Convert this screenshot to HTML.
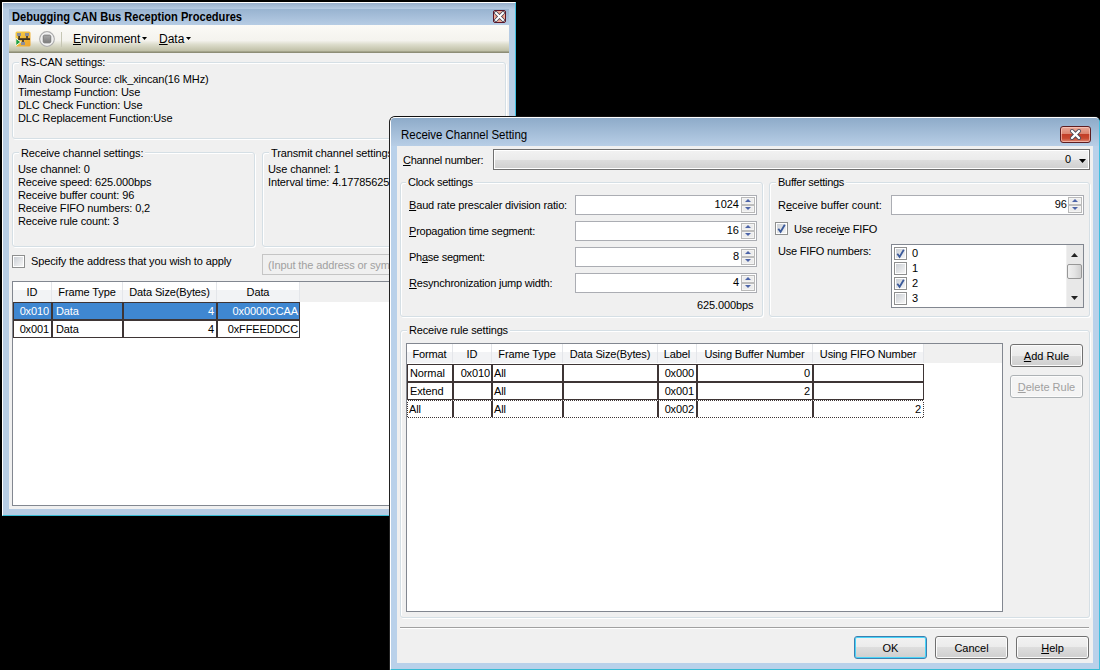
<!DOCTYPE html>
<html><head><meta charset="utf-8">
<style>
*{margin:0;padding:0;box-sizing:border-box}
html,body{width:1100px;height:670px;overflow:hidden;background:#000}
body{position:relative;font-family:"Liberation Sans",sans-serif;font-size:11px;color:#000;letter-spacing:-0.12px}
.a{position:absolute}
.t{position:absolute;white-space:nowrap;line-height:13px}
u{text-decoration:underline;text-decoration-thickness:1px;text-underline-offset:1px}
.grp{position:absolute;border:1px solid #d5dfe5;border-radius:3px;box-shadow:inset 1px 1px 0 #fff,1px 1px 0 #fff}
.glab{position:absolute;background:#f0f0f0;padding:0 2px 0 2px;white-space:nowrap;line-height:13px}
.inp{position:absolute;background:#fff;border:1px solid #abadb3;border-top-color:#abadb3}
.spin{position:absolute;width:15px;}
.cb{position:absolute;width:13px;height:13px;border:1px solid #8e8f8f;background:#fff}
.cb i{position:absolute;left:1px;top:1px;width:9px;height:9px;background:linear-gradient(135deg,#cbcfd5,#f6f6f6)}
.btn{position:absolute;border:1px solid #707070;border-radius:3px;background:linear-gradient(#f2f2f2 0,#ebebeb 50%,#dddddd 50%,#cfcfcf 100%);box-shadow:inset 0 0 0 1px #fcfcfc;text-align:center;line-height:22px;white-space:nowrap}
.grid{position:absolute;border-collapse:collapse}
.hdr{position:absolute;background:linear-gradient(#ffffff 0,#ffffff 40%,#f2f3f5 40%,#f2f3f5 100%)}
.hc{position:absolute;top:0;height:100%;border-right:1px solid #e4e6ea;text-align:center;line-height:21px;white-space:nowrap}
.cell{position:absolute;border:1px solid #3e3535;background:#fff;line-height:17px;white-space:nowrap;overflow:hidden}
</style></head><body>

<!-- ============ WINDOW 1 ============ -->
<div class="a" style="left:2px;top:2px;width:514px;height:514px;background:#b6cce4;border-left:1px solid #fff;border-top:1px solid #fff;border-right:1px solid #41bfdf;border-bottom:1px solid #38bcd4"></div>
<div class="a" style="left:3px;top:3px;width:512px;height:6px;background:linear-gradient(#97afcb,#b5cbe3)"></div>
<div class="a" style="left:9px;top:9px;width:500px;height:16px;background:linear-gradient(#98b3d0,#b6cce4)"></div>
<div class="t" style="left:12px;top:11px;font-weight:bold;font-size:12px;letter-spacing:0;transform:scaleX(0.925);transform-origin:0 0">Debugging CAN Bus Reception Procedures</div>
<!-- close small -->
<div class="a" style="left:493px;top:10px;width:13px;height:13px;border:1px solid #5c1325;border-radius:2px;background:radial-gradient(circle,#e05a3a 0,#f1b6a2 70%,#f3c9bb 100%)"></div>
<svg class="a" style="left:493px;top:10px" width="13" height="13" viewBox="0 0 13 13"><path d="M3 3 L10 10 M10 3 L3 10" stroke="#3a3f55" stroke-width="3.4" stroke-linecap="square"/><path d="M3 3 L10 10 M10 3 L3 10" stroke="#fff" stroke-width="2" stroke-linecap="square"/></svg>

<!-- toolbar -->
<div class="a" style="left:9px;top:25px;width:500px;height:28px;background:linear-gradient(#fbfaf6 0,#f4f3ee 55%,#dcdccb 70%,#bfbfa6 93%,#8d8d76 96%,#8d8d76 100%)"></div>
<!-- icon 1 -->
<svg class="a" style="left:15px;top:31px" width="16" height="16" viewBox="0 0 16 16">
<defs><linearGradient id="og" x1="0" y1="0" x2="1" y2="1"><stop offset="0" stop-color="#f5d048"/><stop offset="1" stop-color="#eda22c"/></linearGradient></defs>
<rect x="0.5" y="0.5" width="15" height="15" rx="1.5" fill="url(#og)"/>
<rect x="2" y="2" width="4" height="3" fill="#8c8f9c"/><rect x="10" y="2" width="4" height="3" fill="#8c8f9c"/>
<rect x="3.3" y="5" width="1.6" height="2.5" fill="#3a3020"/><rect x="11.2" y="5" width="1.6" height="2.5" fill="#3a3020"/>
<rect x="3" y="7.2" width="12" height="1.8" fill="#3a3020"/><rect x="7.2" y="9" width="1.6" height="2" fill="#3a3020"/>
<rect x="6" y="11" width="4" height="3" fill="#8c8f9c"/>
<path d="M0.8 7.3 L5.8 11 L0.8 14.8 Z" fill="#20a040" stroke="#fff" stroke-width="0.9"/>
</svg>
<!-- icon 2 stop -->
<svg class="a" style="left:39px;top:31px" width="16" height="16" viewBox="0 0 16 16">
<defs><linearGradient id="sq" x1="0" y1="0" x2="0" y2="1"><stop offset="0" stop-color="#a8a8a8"/><stop offset="1" stop-color="#7c7c7c"/></linearGradient></defs>
<circle cx="8" cy="8" r="7.3" fill="#e6e6e6" stroke="#adadad" stroke-width="1.2"/>
<circle cx="8" cy="8" r="6" fill="none" stroke="#f6f6f6" stroke-width="1"/>
<rect x="4.3" y="4.2" width="7.4" height="7.6" rx="1.2" fill="url(#sq)" stroke="#707070" stroke-width="0.8"/>
</svg>
<div class="a" style="left:61px;top:32px;width:1px;height:15px;background:#c6c6b4"></div>
<div class="t" style="left:73px;top:33px;font-size:12px;letter-spacing:0"><u>E</u>nvironment</div>
<svg class="a" style="left:142px;top:37px" width="5" height="3"><path d="M0 0 H5 L2.5 3 Z" fill="#000"/></svg>
<div class="t" style="left:159px;top:33px;font-size:12px;letter-spacing:0"><u>D</u>ata</div>
<svg class="a" style="left:186px;top:37px" width="5" height="3"><path d="M0 0 H5 L2.5 3 Z" fill="#000"/></svg>

<!-- client -->
<div class="a" style="left:9px;top:53px;width:500px;height:456px;background:#f0f0f0"></div>

<!-- RS-CAN group -->
<div class="grp" style="left:12px;top:62px;width:494px;height:77px"></div>
<div class="glab" style="left:19px;top:56px">RS-CAN settings:</div>
<div class="t" style="left:18px;top:73px">Main Clock Source: clk_xincan(16 MHz)</div>
<div class="t" style="left:18px;top:86px">Timestamp Function: Use</div>
<div class="t" style="left:18px;top:99px">DLC Check Function: Use</div>
<div class="t" style="left:18px;top:112px">DLC Replacement Function:Use</div>

<!-- receive channel group -->
<div class="grp" style="left:12px;top:152px;width:243px;height:95px"></div>
<div class="glab" style="left:19px;top:147px">Receive channel settings:</div>
<div class="t" style="left:18px;top:163px">Use channel: 0</div>
<div class="t" style="left:18px;top:176px">Receive speed: 625.000bps</div>
<div class="t" style="left:18px;top:189px">Receive buffer count: 96</div>
<div class="t" style="left:18px;top:202px">Receive FIFO numbers: 0,2</div>
<div class="t" style="left:18px;top:215px">Receive rule count: 3</div>

<!-- transmit group -->
<div class="grp" style="left:262px;top:152px;width:244px;height:95px"></div>
<div class="glab" style="left:269px;top:147px">Transmit channel settings:</div>
<div class="t" style="left:268px;top:163px">Use channel: 1</div>
<div class="t" style="left:268px;top:176px">Interval time: 4.177856255ms</div>

<!-- specify -->
<div class="cb" style="left:12px;top:255px"><i></i></div>
<div class="t" style="left:31px;top:255px">Specify the address that you wish to apply</div>
<div class="inp" style="left:262px;top:254px;width:200px;height:21px;background:#f0f0f0;border-color:#c5c5c5"></div>
<div class="t" style="left:268px;top:259px;color:#a0a0a0">(Input the address or symbol)</div>

<!-- list 1 -->
<div class="a" style="left:12px;top:281px;width:500px;height:225px;background:#fff;border:1px solid #828790"></div>
<div class="a" style="left:13px;top:282px;width:490px;height:20px;background:#f0f0f0"></div>
<div class="hdr" style="left:13px;top:282px;width:287px;height:20px">
  <div class="hc" style="left:0;width:39px">ID</div>
  <div class="hc" style="left:39px;width:71px">Frame Type</div>
  <div class="hc" style="left:110px;width:94px">Data Size(Bytes)</div>
  <div class="hc" style="left:204px;width:83px">Data</div>
</div>
<div class="cell" style="left:13px;top:302px;width:39px;height:18px;background:#3f87d1;color:#fff;text-align:right;padding-right:2px">0x010</div>
<div class="cell" style="left:52px;top:302px;width:71px;height:18px;background:#3f87d1;color:#fff;padding-left:3px">Data</div>
<div class="cell" style="left:123px;top:302px;width:94px;height:18px;background:#3f87d1;color:#fff;text-align:right;padding-right:2px">4</div>
<div class="cell" style="left:217px;top:302px;width:83px;height:18px;background:#3f87d1;color:#fff;text-align:right;padding-right:1px">0x0000CCAA</div>
<div class="cell" style="left:13px;top:320px;width:39px;height:18px;text-align:right;padding-right:2px">0x001</div>
<div class="cell" style="left:52px;top:320px;width:71px;height:18px;padding-left:3px">Data</div>
<div class="cell" style="left:123px;top:320px;width:94px;height:18px;text-align:right;padding-right:2px">4</div>
<div class="cell" style="left:217px;top:320px;width:83px;height:18px;text-align:right;padding-right:1px">0xFFEEDDCC</div>

<!-- ============ WINDOW 2 ============ -->
<div class="a" style="left:389px;top:116px;width:711px;height:554px;border-left:1px solid #222;border-top:1px solid #111;border-top-left-radius:6px;border-top-right-radius:6px;background:#000"></div>
<div class="a" style="left:390px;top:117px;width:710px;height:553px;background:#b9d1ea;border-left:1px solid #fff;border-top:1px solid #fff;border-right:1px solid #41bfdf;border-bottom:1px solid #38bcd4;border-top-left-radius:5px;border-top-right-radius:5px"></div>
<div class="a" style="left:391px;top:118px;width:708px;height:28px;background:linear-gradient(#8eabc9,#b8cee6);border-top-left-radius:4px;border-top-right-radius:4px"></div>
<div class="t" style="left:401px;top:129px;font-size:12px;letter-spacing:0;transform:scaleX(0.955);transform-origin:0 0">Receive Channel Setting</div>
<!-- close red -->
<div class="a" style="left:1060px;top:126px;width:31px;height:17px;border:1px solid #5e1d20;border-radius:3px;background:linear-gradient(#e9a898 0,#dc8570 45%,#c23e28 50%,#c8482f 75%,#dc8a74 100%);box-shadow:inset 0 0 0 1px rgba(255,210,200,0.6)"></div>
<svg class="a" style="left:1060px;top:126px" width="31" height="17" viewBox="0 0 31 17"><path d="M12 5 L19 12 M19 5 L12 12" stroke="#4a4a5a" stroke-width="4" stroke-linecap="round"/><path d="M12 5 L19 12 M19 5 L12 12" stroke="#fff" stroke-width="2.4" stroke-linecap="round"/></svg>

<!-- client 2 -->
<div class="a" style="left:397px;top:146px;width:696px;height:517px;background:#f0f0f0"></div>
<div class="t" style="left:403px;top:154px;letter-spacing:-0.28px"><u>C</u>hannel number:</div>
<div class="a" style="left:493px;top:149px;width:597px;height:21px;border:1px solid #707070;background:linear-gradient(#f2f2f2 0,#ebebeb 52%,#dddddd 52%,#cfcfcf 100%);box-shadow:inset 0 0 0 1px #fff"></div>
<div class="t" style="left:1065px;top:153px;letter-spacing:0">0</div>
<svg class="a" style="left:1079px;top:159px" width="7" height="4"><path d="M0 0 H7 L3.5 4 Z" fill="#000"/></svg>

<!-- clock group -->
<div class="grp" style="left:400px;top:182px;width:363px;height:135px"></div>
<div class="glab" style="left:406px;top:176px;letter-spacing:-0.27px">Clock settings</div>
<div class="t" style="left:409px;top:199px;letter-spacing:-0.15px"><u>B</u>aud rate prescaler division ratio:</div>
<div class="t" style="left:409px;top:225px;letter-spacing:-0.22px"><u>P</u>ropagation time segment:</div>
<div class="t" style="left:409px;top:251px;letter-spacing:-0.27px">Ph<u>a</u>se segment:</div>
<div class="t" style="left:409px;top:277px;letter-spacing:-0.2px"><u>R</u>esynchronization jump width:</div>
<div class="inp" style="left:575px;top:195px;width:182px;height:20px"></div>
<div class="inp" style="left:575px;top:221px;width:182px;height:20px"></div>
<div class="inp" style="left:575px;top:247px;width:182px;height:20px"></div>
<div class="inp" style="left:575px;top:273px;width:182px;height:20px"></div>
<div class="t" style="left:640px;top:198px;width:99px;text-align:right;letter-spacing:0">1024</div>
<div class="t" style="left:640px;top:224px;width:99px;text-align:right;letter-spacing:0">16</div>
<div class="t" style="left:640px;top:250px;width:99px;text-align:right;letter-spacing:0">8</div>
<div class="t" style="left:640px;top:276px;width:99px;text-align:right;letter-spacing:0">4</div>
<svg class="a" style="left:741px;top:197px" width="14" height="16" viewBox="0 0 14 16"><rect x="0.5" y="0.5" width="13" height="15" fill="#f4f4f4" stroke="#b9b9b9"/><rect x="0" y="7" width="14" height="2" fill="#bdbdbd"/><rect x="2" y="2" width="10" height="4" fill="#ececec"/><rect x="2" y="10" width="10" height="4" fill="#ececec"/><path d="M4 5 H10 L7 2 Z" fill="#4c64a8"/><path d="M4 10 H10 L7 13 Z" fill="#4c64a8"/></svg><svg class="a" style="left:741px;top:223px" width="14" height="16" viewBox="0 0 14 16"><rect x="0.5" y="0.5" width="13" height="15" fill="#f4f4f4" stroke="#b9b9b9"/><rect x="0" y="7" width="14" height="2" fill="#bdbdbd"/><rect x="2" y="2" width="10" height="4" fill="#ececec"/><rect x="2" y="10" width="10" height="4" fill="#ececec"/><path d="M4 5 H10 L7 2 Z" fill="#4c64a8"/><path d="M4 10 H10 L7 13 Z" fill="#4c64a8"/></svg><svg class="a" style="left:741px;top:249px" width="14" height="16" viewBox="0 0 14 16"><rect x="0.5" y="0.5" width="13" height="15" fill="#f4f4f4" stroke="#b9b9b9"/><rect x="0" y="7" width="14" height="2" fill="#bdbdbd"/><rect x="2" y="2" width="10" height="4" fill="#ececec"/><rect x="2" y="10" width="10" height="4" fill="#ececec"/><path d="M4 5 H10 L7 2 Z" fill="#4c64a8"/><path d="M4 10 H10 L7 13 Z" fill="#4c64a8"/></svg><svg class="a" style="left:741px;top:275px" width="14" height="16" viewBox="0 0 14 16"><rect x="0.5" y="0.5" width="13" height="15" fill="#f4f4f4" stroke="#b9b9b9"/><rect x="0" y="7" width="14" height="2" fill="#bdbdbd"/><rect x="2" y="2" width="10" height="4" fill="#ececec"/><rect x="2" y="10" width="10" height="4" fill="#ececec"/><path d="M4 5 H10 L7 2 Z" fill="#4c64a8"/><path d="M4 10 H10 L7 13 Z" fill="#4c64a8"/></svg>
<div class="t" style="left:697px;top:299px;letter-spacing:-0.1px">625.000bps</div>

<!-- buffer group -->
<div class="grp" style="left:769px;top:182px;width:321px;height:135px"></div>
<div class="glab" style="left:776px;top:176px;letter-spacing:-0.27px">Buffer settings</div>
<div class="t" style="left:778px;top:199px;letter-spacing:0">R<u>e</u>ceive buffer count:</div>
<div class="inp" style="left:891px;top:195px;width:193px;height:20px"></div>
<svg class="a" style="left:1068px;top:197px" width="14" height="16" viewBox="0 0 14 16"><rect x="0.5" y="0.5" width="13" height="15" fill="#f4f4f4" stroke="#b9b9b9"/><rect x="0" y="7" width="14" height="2" fill="#bdbdbd"/><rect x="2" y="2" width="10" height="4" fill="#ececec"/><rect x="2" y="10" width="10" height="4" fill="#ececec"/><path d="M4 5 H10 L7 2 Z" fill="#4c64a8"/><path d="M4 10 H10 L7 13 Z" fill="#4c64a8"/></svg>
<div class="t" style="left:980px;top:198px;width:87px;text-align:right;letter-spacing:0">96</div>
<div class="cb" style="left:775px;top:222px"><i></i></div>
<svg class="a" style="left:775px;top:222px" width="13" height="13" viewBox="0 0 13 13"><path d="M3.3 6.8 L5.6 9.8 L9.8 2.8" fill="none" stroke="#3b5a9b" stroke-width="1.8"/></svg>
<div class="t" style="left:794px;top:223px;letter-spacing:-0.2px">Use recei<u>v</u>e FIFO</div>
<div class="t" style="left:778px;top:245px;letter-spacing:-0.2px">Use FIFO numbers:</div>
<div class="a" style="left:891px;top:244px;width:193px;height:64px;background:#fff;border:1px solid #828790"></div>
<div class="cb" style="left:894px;top:247px"><i></i></div>
<svg class="a" style="left:894px;top:247px" width="13" height="13" viewBox="0 0 13 13"><path d="M3.3 6.8 L5.6 9.8 L9.8 2.8" fill="none" stroke="#3b5a9b" stroke-width="1.8"/></svg>
<div class="cb" style="left:894px;top:262px"><i></i></div>
<div class="cb" style="left:894px;top:277px"><i></i></div>
<svg class="a" style="left:894px;top:277px" width="13" height="13" viewBox="0 0 13 13"><path d="M3.3 6.8 L5.6 9.8 L9.8 2.8" fill="none" stroke="#3b5a9b" stroke-width="1.8"/></svg>
<div class="cb" style="left:894px;top:292px;height:13px"><i></i></div>
<div class="t" style="left:912px;top:247px;letter-spacing:0">0</div>
<div class="t" style="left:912px;top:262px;letter-spacing:0">1</div>
<div class="t" style="left:912px;top:277px;letter-spacing:0">2</div>
<div class="t" style="left:912px;top:292px;letter-spacing:0">3</div>
<!-- scrollbar -->
<div class="a" style="left:1066px;top:245px;width:17px;height:62px;background:#e8e8e8;border-left:1px solid #f0f0f0"></div>
<svg class="a" style="left:1071px;top:253px" width="7" height="4"><path d="M0 4 H7 L3.5 0 Z" fill="#222"/></svg>
<div class="a" style="left:1067px;top:264px;width:15px;height:15px;border:1px solid #979797;border-radius:2px;background:linear-gradient(90deg,#f0f0f0,#e4e4e4 50%,#cfcfcf)"></div>
<svg class="a" style="left:1071px;top:296px" width="7" height="4"><path d="M0 0 H7 L3.5 4 Z" fill="#222"/></svg>

<!-- rule group -->
<div class="grp" style="left:400px;top:330px;width:690px;height:288px"></div>
<div class="glab" style="left:407px;top:324px;letter-spacing:-0.15px">Receive rule settings</div>
<div class="a" style="left:406px;top:343px;width:597px;height:269px;background:#fff;border:1px solid #828790"></div>
<div class="a" style="left:407px;top:344px;width:595px;height:19px;background:#f0f0f0"></div>
<div class="hdr" style="left:407px;top:344px;width:517px;height:19px">
  <div class="hc" style="left:0;width:46px">Format</div>
  <div class="hc" style="left:46px;width:39px">ID</div>
  <div class="hc" style="left:85px;width:71px">Frame Type</div>
  <div class="hc" style="left:156px;width:95px">Data Size(Bytes)</div>
  <div class="hc" style="left:251px;width:39px">Label</div>
  <div class="hc" style="left:290px;width:116px">Using Buffer Number</div>
  <div class="hc" style="left:406px;width:111px">Using FIFO Number</div>
</div>
<!-- rows -->
<div class="cell" style="left:407px;top:364px;width:46px;height:18px;padding-left:2px">Normal</div>
<div class="cell" style="left:453px;top:364px;width:39px;height:18px;text-align:right;padding-right:1px">0x010</div>
<div class="cell" style="left:492px;top:364px;width:71px;height:18px;padding-left:1px">All</div>
<div class="cell" style="left:563px;top:364px;width:95px;height:18px"></div>
<div class="cell" style="left:658px;top:364px;width:39px;height:18px;text-align:right;padding-right:2px">0x000</div>
<div class="cell" style="left:697px;top:364px;width:116px;height:18px;text-align:right;padding-right:2px">0</div>
<div class="cell" style="left:813px;top:364px;width:111px;height:18px"></div>

<div class="cell" style="left:407px;top:382px;width:46px;height:18px;padding-left:2px">Extend</div>
<div class="cell" style="left:453px;top:382px;width:39px;height:18px"></div>
<div class="cell" style="left:492px;top:382px;width:71px;height:18px;padding-left:1px">All</div>
<div class="cell" style="left:563px;top:382px;width:95px;height:18px"></div>
<div class="cell" style="left:658px;top:382px;width:39px;height:18px;text-align:right;padding-right:2px">0x001</div>
<div class="cell" style="left:697px;top:382px;width:116px;height:18px;text-align:right;padding-right:2px">2</div>
<div class="cell" style="left:813px;top:382px;width:111px;height:18px"></div>

<div class="cell" style="left:407px;top:400px;width:46px;height:18px;padding-left:1px">All</div>
<div class="cell" style="left:453px;top:400px;width:39px;height:18px"></div>
<div class="cell" style="left:492px;top:400px;width:71px;height:18px;padding-left:1px">All</div>
<div class="cell" style="left:563px;top:400px;width:95px;height:18px"></div>
<div class="cell" style="left:658px;top:400px;width:39px;height:18px;text-align:right;padding-right:2px">0x002</div>
<div class="cell" style="left:697px;top:400px;width:116px;height:18px"></div>
<div class="cell" style="left:813px;top:400px;width:111px;height:18px;text-align:right;padding-right:2px">2</div>

<div class="a" style="left:407px;top:400px;width:517px;height:18px;border:1px dotted #fff"></div>
<!-- buttons -->
<div class="btn" style="left:1010px;top:344px;width:73px;height:23px;letter-spacing:0"><u>A</u>dd Rule</div>
<div class="btn" style="left:1010px;top:375px;width:73px;height:23px;letter-spacing:0;border-color:#adb2b5;background:#f4f4f4;color:#a0a0a0"><u>D</u>elete Rule</div>

<div class="a" style="left:400px;top:627px;width:689px;height:1px;background:#a0a0a0"></div>
<div class="a" style="left:400px;top:628px;width:689px;height:1px;background:#fff"></div>

<div class="btn" style="left:854px;top:636px;width:73px;height:23px;letter-spacing:0;border-color:#3c7fb1;box-shadow:inset 0 0 0 1px #48d4f8">OK</div>
<div class="btn" style="left:935px;top:636px;width:73px;height:23px;letter-spacing:0">Cancel</div>
<div class="btn" style="left:1016px;top:636px;width:73px;height:23px;letter-spacing:0"><u>H</u>elp</div>

</body></html>
